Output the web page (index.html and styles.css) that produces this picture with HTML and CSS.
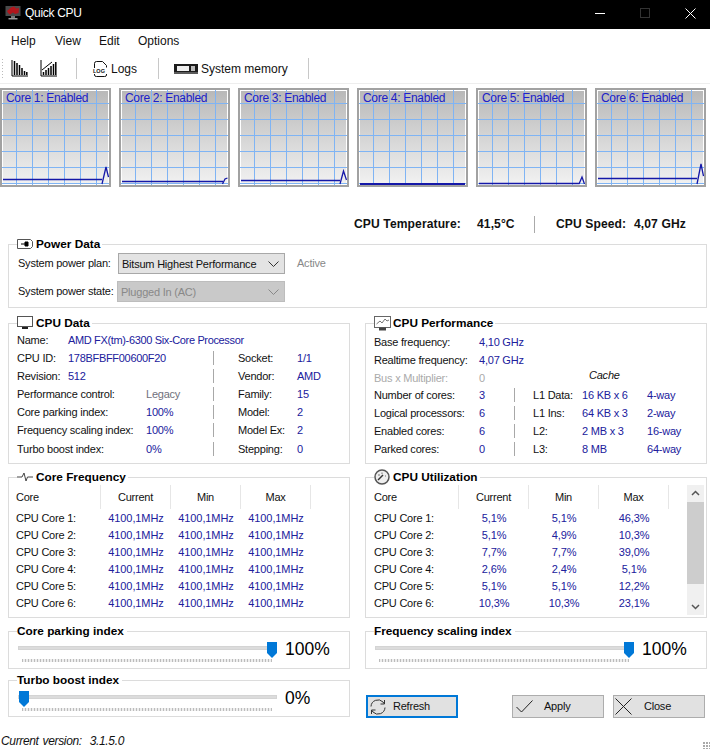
FILE: index.html
```html
<!DOCTYPE html>
<html lang="en">
<head>
<meta charset="utf-8">
<title>Quick CPU</title>
<link rel="stylesheet" href="styles.css">
</head>
<body>
<div class="app">
  <header class="titlebar">
    <svg class="app-icon" width="16" height="16" viewBox="0 0 16 16"><rect x="0.5" y="1" width="15" height="10" fill="#4a4a4a"/><path d="M2 6 6 2.500 9 1.500 11 3.500 14 3 13.500 8 10 9 8 7.500 5 9.500 3 8z" fill="#b3161c"/><rect x="6" y="11" width="4" height="2" fill="#777"/><rect x="3.500" y="13" width="9" height="1.500" fill="#999"/></svg>
    <span class="title">Quick CPU</span>
    <span class="win-btns">
      <svg width="10" height="10" viewBox="0 0 10 10"><path d="M0 5.500h10" stroke="#fff"/></svg>
      <svg width="10" height="10" viewBox="0 0 10 10"><rect x=".5" y=".5" width="9" height="9" fill="none" stroke="#333"/></svg>
      <svg width="11" height="11" viewBox="0 0 11 11"><path d="M.5.500l10 10M10.500.5l-10 10" stroke="#fff" fill="none"/></svg>
    </span>
  </header>
  <nav class="menu"><span>Help</span><span>View</span><span>Edit</span><span>Options</span></nav>
  <div class="toolbar">
    <span class="grip"></span>
    <svg class="tb-a" width="17" height="17" viewBox="0 0 17 17"><path d="M1 0v16h16" fill="none" stroke="#000"/><path d="M3.500 1v14M6 3v12M8.500 5v10M11 8v7M13.500 11v4M15.800 12v3" stroke="#000" stroke-width="1.500"/></svg>
    <svg class="tb-b" width="17" height="17" viewBox="0 0 17 17"><path d="M1 0v16h16" fill="none" stroke="#000"/><path d="M3.500 12v3M6 10v5M8.500 8v7M11 6v9M13.500 4v11M15.800 2v13" stroke="#000" stroke-width="1.500"/><path d="M2 10 12 2" stroke="#000"/></svg>
    <span class="tb-sep sep-1"></span>
    <svg class="tb-log" width="17" height="17" viewBox="0 0 17 17"><path d="M2.500 8V3.500q0-2 2-2h6l4 4v2M14.500 14v1q0 1.500-2 1.500h-8q-2 0-2-1.500v-1" fill="none" stroke="#111"/><text class="log-text" x="1" y="13">LOG</text></svg>
    <span class="tb-text">Logs</span>
    <span class="tb-sep sep-2"></span>
    <svg class="tb-mem" width="24" height="10" viewBox="0 0 24 10"><rect width="24" height="10" fill="#1c1c1c"/><rect x="3" y="2" width="12" height="5" fill="#eee"/><rect x="17" y="2" width="4" height="5" fill="#bbb"/><path d="M1 10V8M3 10V8M5 10V8M7 10V8M9 10V8M11 10V8M13 10V8M15 10V8M17 10V8M19 10V8M21 10V8M23 10V8" stroke="#999"/></svg>
    <span class="tb-text mem-text">System memory</span>
    <span class="tb-sep sep-3"></span>
  </div>

  <section class="charts">
    <div class="chart"><span class="chart-label">Core 1: Enabled</span><svg viewBox="2 2 107 95" width="107" height="95"><path class="grid-lines" d="M16.500 2v95M32.500 2v95M48.500 2v95M64.500 2v95M80.500 2v95M96.500 2v95M2 15.500h107M2 31.500h107M2 47.500h107M2 63.500h107M2 79.500h107M2 95.500h107"/><path class="data" d="M3 91.500H102M102 96 106 79 108.500 89"/></svg></div>
    <div class="chart"><span class="chart-label">Core 2: Enabled</span><svg viewBox="2 2 107 95" width="107" height="95"><path class="grid-lines" d="M16.500 2v95M32.500 2v95M48.500 2v95M64.500 2v95M80.500 2v95M96.500 2v95M2 15.500h107M2 31.500h107M2 47.500h107M2 63.500h107M2 79.500h107M2 95.500h107"/><path class="data" d="M3 93.500H104M103.500 96 106 91 108.500 90"/></svg></div>
    <div class="chart"><span class="chart-label">Core 3: Enabled</span><svg viewBox="2 2 107 95" width="107" height="95"><path class="grid-lines" d="M16.500 2v95M32.500 2v95M48.500 2v95M64.500 2v95M80.500 2v95M96.500 2v95M2 15.500h107M2 31.500h107M2 47.500h107M2 63.500h107M2 79.500h107M2 95.500h107"/><path class="data" d="M3 92.500H102M102 96 105.500 83 108.500 92"/></svg></div>
    <div class="chart"><span class="chart-label">Core 4: Enabled</span><svg viewBox="2 2 107 95" width="107" height="95"><path class="grid-lines" d="M16.500 2v95M32.500 2v95M48.500 2v95M64.500 2v95M80.500 2v95M96.500 2v95M2 15.500h107M2 31.500h107M2 47.500h107M2 63.500h107M2 79.500h107M2 95.500h107"/><path class="data thick" d="M3 96H108"/></svg></div>
    <div class="chart"><span class="chart-label">Core 5: Enabled</span><svg viewBox="2 2 107 95" width="107" height="95"><path class="grid-lines" d="M16.500 2v95M32.500 2v95M48.500 2v95M64.500 2v95M80.500 2v95M96.500 2v95M2 15.500h107M2 31.500h107M2 47.500h107M2 63.500h107M2 79.500h107M2 95.500h107"/><path class="data" d="M3 95.500H103M103 96 106 89 108.500 96"/></svg></div>
    <div class="chart"><span class="chart-label">Core 6: Enabled</span><svg viewBox="2 2 107 95" width="107" height="95"><path class="grid-lines" d="M16.500 2v95M32.500 2v95M48.500 2v95M64.500 2v95M80.500 2v95M96.500 2v95M2 15.500h107M2 31.500h107M2 47.500h107M2 63.500h107M2 79.500h107M2 95.500h107"/><path class="data" d="M3 90.500H102M102 96 106 76 108.500 88"/></svg></div>
  </section>

  <div class="status">
    <b class="st-temp">CPU Temperature:</b><b class="st-temp-val">41,5°C</b>
    <span class="st-sep"></span>
    <b class="st-speed">CPU Speed:</b><b class="st-speed-val">4,07 GHz</b>
  </div>

  <section class="group power">
    <h2 class="legend"><svg width="16" height="10" viewBox="0 0 16 10"><path d="M.5.500h13l2 2v5l-2 2H.5z" fill="#fff" stroke="#555"/><path d="M4 5h4M8 3h3v4H8z" stroke="#000" fill="#000"/></svg>Power Data</h2>
    <div class="power-grid">
      <span class="lbl">System power plan:</span>
      <div class="select"><span>Bitsum Highest Performance</span><svg width="11" height="6" viewBox="0 0 11 6"><path d="M.5.500 5.500 5.500 10.500.5" fill="none" stroke="#333"/></svg></div>
      <span class="muted lbl">Active</span>
      <span class="lbl">System power state:</span>
      <div class="select disabled"><span>Plugged In (AC)</span><svg width="11" height="6" viewBox="0 0 11 6"><path d="M.5.500 5.500 5.500 10.500.5" fill="none" stroke="#888"/></svg></div>
    </div>
  </section>

  <div class="lower">
    <section class="group">
      <h2 class="legend"><svg width="16" height="14" viewBox="0 0 16 14"><rect x=".5" y=".5" width="15" height="10" fill="#fff" stroke="#555"/><path d="M5 13h6v-2H5z" fill="#222"/></svg>CPU Data</h2>
      <div class="data-grid">
        <span>Name:</span><span class="val wide">AMD FX(tm)-6300 Six-Core Processor</span>
        <span>CPU ID:</span><span class="val mid">178BFBFF00600F20</span><i class="vsep"></i><span>Socket:</span><span class="val">1/1</span>
        <span>Revision:</span><span class="val mid">512</span><i class="vsep"></i><span>Vendor:</span><span class="val">AMD</span>
        <span class="lab2">Performance control:</span><span class="dim">Legacy</span><i class="vsep"></i><span>Family:</span><span class="val">15</span>
        <span class="lab2">Core parking index:</span><span class="val">100%</span><i class="vsep"></i><span>Model:</span><span class="val">2</span>
        <span class="lab2">Frequency scaling index:</span><span class="val">100%</span><i class="vsep"></i><span>Model Ex:</span><span class="val">2</span>
        <span class="lab2">Turbo boost index:</span><span class="val">0%</span><i class="vsep"></i><span>Stepping:</span><span class="val">0</span>
      </div>
    </section>

    <section class="group">
      <h2 class="legend tight"><svg width="17" height="15" viewBox="0 0 17 15"><rect x=".5" y=".5" width="16" height="11" fill="#fff" stroke="#666"/><path d="M2.500 8 6 5l2 2 3-4 2 2 2-1" fill="none" stroke="#777"/><path d="M5 14.500h7v-3H5z" fill="#444"/></svg>CPU Performance</h2>
      <div class="perf-grid">
        <span>Base frequency:</span><span class="val perf-wide">4,10 GHz</span>
        <span>Realtime frequency:</span><span class="val perf-wide">4,07 GHz</span>
        <span class="grey">Bus x Multiplier:</span><span class="grey">0</span><span class="cache">Cache</span>
        <span>Number of cores:</span><span class="val">3</span><i class="vsep"></i><span>L1 Data:</span><span class="val">16 KB x 6</span><span class="val">4-way</span>
        <span>Logical processors:</span><span class="val">6</span><i class="vsep"></i><span>L1 Ins:</span><span class="val">64 KB x 3</span><span class="val">2-way</span>
        <span>Enabled cores:</span><span class="val">6</span><i class="vsep"></i><span>L2:</span><span class="val">2 MB x 3</span><span class="val">16-way</span>
        <span>Parked cores:</span><span class="val">0</span><i class="vsep"></i><span>L3:</span><span class="val">8 MB</span><span class="val">64-way</span>
      </div>
    </section>

    <section class="group">
      <h2 class="legend"><svg width="16" height="10" viewBox="0 0 16 10"><path d="M0 5h5l2-4 2 8 1.500-4H16" fill="none" stroke="#444"/></svg>Core Frequency</h2>
      <div class="tbl">
        <span class="th first">Core</span><span class="th">Current</span><span class="th">Min</span><span class="th">Max</span><span></span>
        <span>CPU Core 1:</span><span class="val c">4100,1MHz</span><span class="val c">4100,1MHz</span><span class="val c">4100,1MHz</span><span></span>
        <span>CPU Core 2:</span><span class="val c">4100,1MHz</span><span class="val c">4100,1MHz</span><span class="val c">4100,1MHz</span><span></span>
        <span>CPU Core 3:</span><span class="val c">4100,1MHz</span><span class="val c">4100,1MHz</span><span class="val c">4100,1MHz</span><span></span>
        <span>CPU Core 4:</span><span class="val c">4100,1MHz</span><span class="val c">4100,1MHz</span><span class="val c">4100,1MHz</span><span></span>
        <span>CPU Core 5:</span><span class="val c">4100,1MHz</span><span class="val c">4100,1MHz</span><span class="val c">4100,1MHz</span><span></span>
        <span>CPU Core 6:</span><span class="val c">4100,1MHz</span><span class="val c">4100,1MHz</span><span class="val c">4100,1MHz</span><span></span>
      </div>
    </section>

    <section class="group util">
      <h2 class="legend"><svg width="16" height="16" viewBox="0 0 16 16"><circle cx="8" cy="8" r="7" fill="#eee" stroke="#555" stroke-width="1.500"/><path d="M4 11 9 6" stroke="#333" stroke-width="1.500"/><path d="M4 6h2M8 3.500v1.500M12 7h-1" stroke="#777"/></svg>CPU Utilization</h2>
      <div class="tbl">
        <span class="th first">Core</span><span class="th">Current</span><span class="th">Min</span><span class="th">Max</span><span></span>
        <span>CPU Core 1:</span><span class="val c">5,1%</span><span class="val c">5,1%</span><span class="val c">46,3%</span><span></span>
        <span>CPU Core 2:</span><span class="val c">5,1%</span><span class="val c">4,9%</span><span class="val c">10,3%</span><span></span>
        <span>CPU Core 3:</span><span class="val c">7,7%</span><span class="val c">7,7%</span><span class="val c">39,0%</span><span></span>
        <span>CPU Core 4:</span><span class="val c">2,6%</span><span class="val c">2,4%</span><span class="val c">5,1%</span><span></span>
        <span>CPU Core 5:</span><span class="val c">5,1%</span><span class="val c">5,1%</span><span class="val c">12,2%</span><span></span>
        <span>CPU Core 6:</span><span class="val c">10,3%</span><span class="val c">10,3%</span><span class="val c">23,1%</span><span></span>
      </div>
      <div class="scrollbar">
        <svg width="17" height="17" viewBox="0 0 17 17"><path d="M5 10 8.500 6.500 12 10" fill="none" stroke="#555" stroke-width="1.500"/></svg>
        <span class="thumb"></span>
        <svg class="sb-down" width="17" height="17" viewBox="0 0 17 17"><path d="M5 7 8.500 10.500 12 7" fill="none" stroke="#555" stroke-width="1.500"/></svg>
      </div>
    </section>

    <div class="stack">
      <section class="group slider-box">
        <h2 class="legend plain">Core parking index</h2>
        <div class="slider-row">
          <div class="slider"><span class="track"></span><svg class="knob knob-end" width="10" height="16" viewBox="0 0 10 16"><path d="M0 0h10v11l-5 5-5-5z"/></svg><span class="ticks"></span></div>
          <span class="pct">100%</span>
        </div>
      </section>
      <section class="group slider-box turbo">
        <h2 class="legend plain">Turbo boost index</h2>
        <div class="slider-row">
          <div class="slider"><span class="track"></span><svg class="knob knob-start" width="10" height="16" viewBox="0 0 10 16"><path d="M0 0h10v11l-5 5-5-5z"/></svg><span class="ticks"></span></div>
          <span class="pct">0%</span>
        </div>
      </section>
    </div>

    <div class="stack">
      <section class="group slider-box">
        <h2 class="legend plain">Frequency scaling index</h2>
        <div class="slider-row">
          <div class="slider"><span class="track"></span><svg class="knob knob-end" width="10" height="16" viewBox="0 0 10 16"><path d="M0 0h10v11l-5 5-5-5z"/></svg><span class="ticks"></span></div>
          <span class="pct">100%</span>
        </div>
      </section>
      <div class="buttons">
        <button class="btn focus"><svg width="16" height="16" viewBox="0 0 16 16"><path d="M1 7.500A7 7 0 0 1 13 3l1.500 2M15 8.500A7 7 0 0 1 3 13l-1.500-2M14.500 1v4h-4M1.500 15v-4h4" fill="none" stroke="#333"/></svg><span>Refresh</span></button>
        <button class="btn apply"><svg width="17" height="13" viewBox="0 0 17 13"><path d="M.5 7 5.500 12 16.500.5" fill="none" stroke="#222"/></svg><span>Apply</span></button>
        <button class="btn close"><svg width="17" height="17" viewBox="0 0 17 17"><path d="M.5.500l16 16M16.500.5l-16 16" fill="none" stroke="#222"/></svg><span>Close</span></button>
      </div>
    </div>
  </div>

  <footer class="footer"><em>Current version:&nbsp; 3.1.5.0</em><span class="resize"></span></footer>
</div>
</body>
</html>
```
FILE: styles.css
```css
* { box-sizing: border-box; }
html, body { margin: 0; padding: 0; background: #fff; }
body { font: 11px/14px "Liberation Sans", Arial, sans-serif; color: #111; letter-spacing: -.22px; }
.app { width: 710px; height: 749px; overflow: hidden; display: flex; flex-direction: column; }

.titlebar { height: 29px; flex: none; background: #000; color: #fff; display: flex; align-items: center; padding: 0 0 3px 5px; font-size: 12px; letter-spacing: -.3px; }
.title { margin-left: 4px; }
.win-btns { margin-left: auto; display: flex; align-items: center; gap: 35px; padding-right: 13px; margin-right: 1px; }

.menu { height: 25px; flex: none; display: flex; align-items: center; font-size: 12px; letter-spacing: 0; padding: 0 0 1px 11px; }
.menu span:nth-child(1) { width: 44px; }
.menu span:nth-child(2) { width: 44px; }
.menu span:nth-child(3) { width: 39px; }

.toolbar { height: 30px; flex: none; display: flex; align-items: center; font-size: 12px; letter-spacing: 0; border-bottom: 1px solid #eee; padding-left: 2px; }
.grip { width: 1px; height: 20px; background: repeating-linear-gradient(180deg, #bbb 0 1px, transparent 1px 3px); }
.tb-a { margin-left: 8px; }
.tb-b { margin-left: 12px; }
.tb-sep { width: 1px; height: 21px; background: #c8c8c8; }
.sep-1 { margin-left: 19px; }
.tb-log { margin-left: 15px; }
.log-text { font: 700 5.500px "Liberation Sans", Arial, sans-serif; fill: #111; }
.tb-text { margin-left: 2px; }
.mem-text { margin-left: 3px; }
.sep-2 { margin-left: 21px; }
.tb-mem { margin-left: 15px; }
.sep-3 { margin-left: 20px; }

.charts { display: flex; gap: 8px; margin-top: 4px; height: 99px; flex: none; }
.chart { position: relative; width: 111px; height: 99px; border: 2px solid #a2a2a2; background: linear-gradient(180deg, #b8b8b8, #f2f2f2); box-shadow: inset 0 0 0 1px #fff; }
.chart svg { display: block; }
.chart-label { position: absolute; left: 4px; top: 1px; font-size: 12px; letter-spacing: -.3px; color: #2020c8; white-space: nowrap; }
.grid-lines { stroke: #7fb4f4; fill: none; }
.data { stroke: #1518a8; fill: none; stroke-width: 1.300; }
.data.thick { stroke-width: 2; }

.status { display: flex; align-items: center; height: 18px; margin-top: 28px; padding-left: 354px; font-size: 12.100px; letter-spacing: .1px; flex: none; }
.status b { font-weight: 700; white-space: nowrap; }
.st-temp { width: 123px; }
.st-temp-val { width: 57px; }
.st-sep { width: 1px; height: 17px; background: #aaa; margin-right: 21px; }
.st-speed { width: 78px; }

.group { position: relative; border: 1px solid #dcdcdc; }
.legend { position: absolute; left: 8px; top: -9px; margin: 0; padding: 0 2px 0 0; background: #fff; font: 700 11.800px/16px "Liberation Sans", Arial, sans-serif; letter-spacing: 0; color: #000; display: flex; align-items: center; gap: 3px; white-space: nowrap; }
.legend.tight { gap: 2px; }
.legend.plain { top: -9px; padding-right: 3px; }

.power { margin: 11px 3px 0 8px; height: 64px; padding: 8px 0 0 9px; flex: none; }
.power-grid { display: grid; grid-template-columns: 100px 167px 1fr; grid-template-rows: 21px 21px; row-gap: 7px; align-items: center; white-space: nowrap; }
.lbl { padding-bottom: 2px; }
.select { height: 21px; border: 1px solid #a8a8a8; background: #e3e3e3; display: flex; align-items: center; justify-content: space-between; padding: 0 3px; }
.select svg { margin-right: 2px; }
.select.disabled { background: #c9c9c9; color: #888; border-color: #bdbdbd; margin-left: -1px; }
.muted { color: #888; margin-left: 12px; }

.lower { display: grid; grid-template-columns: 342px 342px; column-gap: 15px; grid-template-rows: 141px 141px 87px; row-gap: 13px; margin: 15px 0 0 8px; flex: none; }
.val { color: #20209c; white-space: nowrap; }
.grey { color: #aaa; }
.dim { color: #70707c; }
.data-grid { display: grid; grid-template-columns: 51px 78px 67px 25px 59px 1fr; grid-template-rows: repeat(6, 18px) 20px; align-items: center; padding: 7px 0 0 8px; white-space: nowrap; }
.data-grid .wide { grid-column: 2 / -1; letter-spacing: -.35px; }
.data-grid .mid { grid-column: 2 / 4; letter-spacing: -.3px; }
.data-grid .lab2 { grid-column: 1 / 3; }
.vsep { width: 1px; height: 14px; background: #a8a8a8; justify-self: start; }

.perf-grid { display: grid; grid-template-columns: 105px 35px 19px 49px 65px 1fr; grid-template-rows: 18px 18px 17px 18px 18px 18px 18px; align-items: center; padding: 9px 0 0 8px; white-space: nowrap; }
.perf-grid .perf-wide { grid-column: 2 / -1; }
.cache { grid-column: 3 / -1; font-style: italic; padding-left: 75px; margin-top: -6px; }

.tbl { display: grid; grid-template-columns: 85px 70px 70px 70px 1fr; grid-template-rows: 24px repeat(6, 17px); align-items: center; padding: 7px 0 0 7px; flex: 1; }
.util { display: flex; padding-right: 2px; }
.util .tbl { padding-left: 8px; align-self: flex-start; }
.tbl .c { text-align: center; letter-spacing: -.1px; }
.th { height: 24px; line-height: 24px; text-align: center; border-right: 1px solid #e6e6e6; align-self: start; }
.th.first { text-align: left; }

.scrollbar { width: 17px; flex: none; height: 130px; margin-top: 7px; background: #f0f0f0; display: flex; flex-direction: column; }
.thumb { height: 82px; background: #cdcdcd; }
.sb-down { margin-top: auto; }

.stack { display: flex; flex-direction: column; }
.slider-box { height: 38px; padding: 10px 0 0 9px; }
.slider-box.turbo { margin-top: 11px; height: 37px; }
.slider-row { display: flex; align-items: flex-start; }
.slider { position: relative; width: 259px; height: 24px; }
.track { display: block; width: 259px; height: 4px; margin-top: 4px; background: #dcdcdc; border: 1px solid #d4d4d4; }
.knob { position: absolute; top: 0; fill: #0078d7; }
.knob-end { left: 249px; }
.knob-start { left: 1px; }
.slider-box:not(.turbo) .track { width: 250px; }
.ticks { display: block; margin: 9px 0 0 4px; width: 250px; height: 3px; background: repeating-linear-gradient(90deg, #bcbcbc 0 1px, #eee 1px 3px); }
.pct { font-size: 17.500px; line-height: 20px; letter-spacing: 0; color: #000; margin: -3px 0 0 8px; }

.buttons { display: flex; margin: 26px 0 0 1px; }
.btn { width: 92px; height: 23px; padding: 0; font: 11px/14px "Liberation Sans", Arial, sans-serif; letter-spacing: -.22px; color: #111; background: #e1e1e1; border: 1px solid #adadad; position: relative; display: flex; align-items: center; }
.btn span { position: relative; top: -1px; }
.btn.focus { border: 2px solid #0078d7; padding-left: 2px; }
.btn.focus span { margin-left: 7px; }
.btn.apply { margin-left: 54px; padding-left: 3px; }
.btn.apply span { margin-left: 11px; }
.btn.close { margin-left: 9px; padding-left: 1px; }
.btn.close span { margin-left: 12px; }

.footer { margin-top: auto; height: 16px; flex: none; display: flex; align-items: center; justify-content: space-between; padding-left: 1px; font-size: 12px; letter-spacing: -.35px; word-spacing: 1px; }
.resize { width: 7px; height: 7px; align-self: flex-end; background: radial-gradient(circle at 1px 1px, #aaa 1px, transparent 1px) 0 0 / 3px 3px; }
```
